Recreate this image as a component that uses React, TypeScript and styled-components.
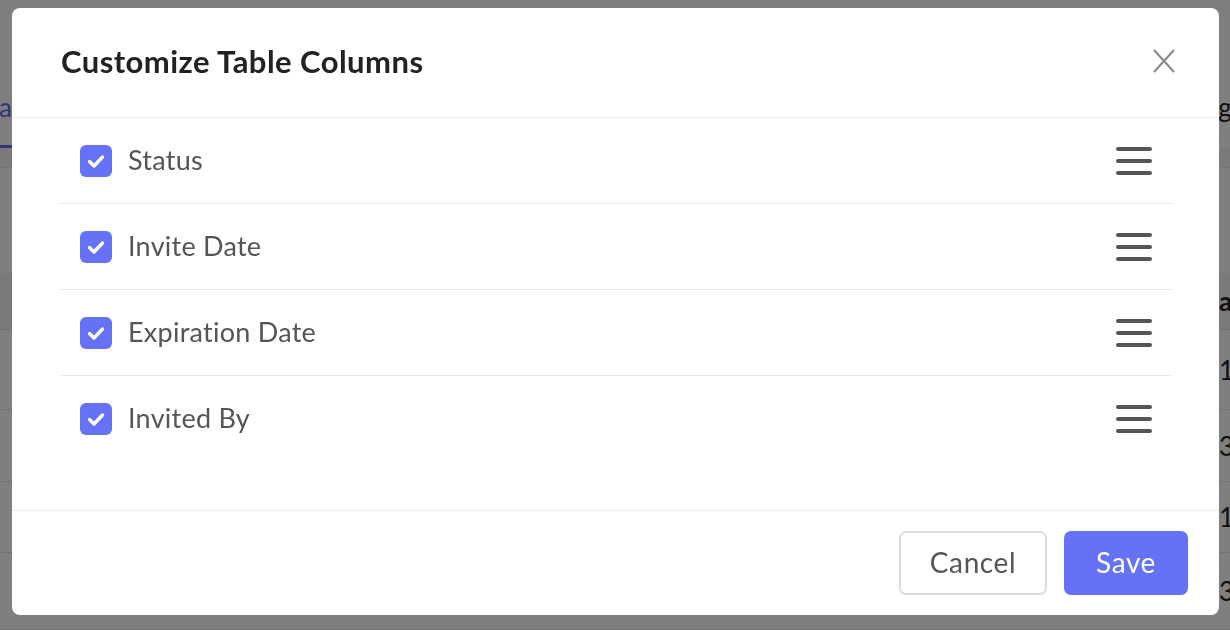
import React, { useState } from 'react'
import styled, { createGlobalStyle } from 'styled-components'

const GlobalStyle = createGlobalStyle`
  html, body {
    margin: 0;
    padding: 0;
  }
  body {
    font-family: Lato, "Liberation Sans", sans-serif;
    background: #ffffff;
  }
  * {
    box-sizing: border-box;
  }
`

/* ---------- page behind the dialog ---------- */

const Page = styled.div`
  width: 100vw;
  height: 100vh;
  overflow: hidden;
  background: #ffffff;
  color: #222;
`

const TabBar = styled.div`
  height: 148px;
  display: flex;
  justify-content: space-between;
  align-items: flex-end;
`

const TabSlot = styled.div<{ $side: 'left' | 'right' }>`
  width: 12px;
  display: flex;
  justify-content: flex-end;
  margin-right: ${({ $side }) => ($side === 'right' ? '-13px' : '0')};
`

const Tab = styled.div<{ $active?: boolean }>`
  white-space: nowrap;
  font-size: 26px;
  padding-bottom: 22px;
  color: ${({ $active }) => ($active ? '#5d6af4' : '#222')};
  border-bottom: 3px solid ${({ $active }) => ($active ? '#5d6af4' : 'transparent')};
`

const SubBar = styled.div`
  height: 20px;
  background: #f4f4f4;
  border-bottom: 1px solid #e9e9e9;
`

const Toolbar = styled.div`
  height: 105px;
`

const TableRow = styled.div<{ $head?: boolean; $h: number }>`
  height: ${({ $h }) => $h}px;
  display: grid;
  grid-template-columns: 1219px 200px;
  align-items: center;
  background: ${({ $head }) => ($head ? '#f4f4f4' : '#ffffff')};
  border-bottom: 1px solid #e6e6e6;
  font-size: 26px;
  font-weight: ${({ $head }) => ($head ? 700 : 400)};
  white-space: nowrap;
`

/* ---------- dialog ---------- */

const Overlay = styled.div`
  position: fixed;
  inset: 0;
  background: rgba(0, 0, 0, 0.5);
  display: flex;
  align-items: flex-start;
  padding: 8px 11px 15px 12px;
`

const Dialog = styled.div`
  width: 1207px;
  height: 607px;
  background: #ffffff;
  border-radius: 8px;
  display: flex;
  flex-direction: column;
  overflow: hidden;
`

const Header = styled.div`
  height: 110px;
  flex-shrink: 0;
  display: flex;
  align-items: center;
  justify-content: space-between;
  padding: 0 44px 4px 49px;
  border-bottom: 1px solid #ececec;
`

const Title = styled.h2`
  margin: 0;
  font-size: 31px;
  font-weight: 700;
  color: #222222;
  letter-spacing: 0.45px;
`

const CloseButton = styled.button`
  width: 22px;
  height: 24px;
  padding: 0;
  border: 0;
  background: none;
  cursor: pointer;
  display: flex;
`

const Body = styled.div`
  flex: 1;
  padding: 0 47px 0 48px;
`

const Row = styled.div`
  height: 86px;
  display: flex;
  align-items: center;
  padding: 0 20px;
  border-bottom: 1px solid #e8e8e8;

  &:last-child {
    border-bottom: 0;
  }
`

const Check = styled.button<{ $on: boolean }>`
  width: 32px;
  height: 32px;
  flex-shrink: 0;
  padding: 0;
  border: 0;
  border-radius: 6px;
  background: ${({ $on }) => ($on ? '#6672f6' : '#ffffff')};
  box-shadow: ${({ $on }) => ($on ? 'none' : 'inset 0 0 0 2px #cfcfcf')};
  display: flex;
  align-items: center;
  justify-content: center;
  cursor: pointer;
`

const Label = styled.span`
  flex: 1;
  margin: 0 0 3px 16px;
  font-size: 27px;
  letter-spacing: 0.25px;
  color: #555555;
`

const Handle = styled.div`
  width: 36px;
  height: 28px;
  display: flex;
  flex-direction: column;
  justify-content: space-between;
  cursor: grab;
`

const HandleLine = styled.span`
  height: 4px;
  border-radius: 2px;
  background: #555555;
`

const Footer = styled.div`
  height: 105px;
  flex-shrink: 0;
  display: flex;
  align-items: flex-start;
  justify-content: flex-end;
  gap: 17px;
  padding: 20px 31px 0 0;
  border-top: 1px solid #ececec;
`

const Button = styled.button<{ $primary?: boolean }>`
  height: 64px;
  width: ${({ $primary }) => ($primary ? '124px' : '148px')};
  padding: 0 0 3px;
  border-radius: 7px;
  font-family: inherit;
  font-size: 28px;
  letter-spacing: 0.6px;
  cursor: pointer;
  color: ${({ $primary }) => ($primary ? '#ffffff' : '#555555')};
  background: ${({ $primary }) => ($primary ? '#6672f6' : '#ffffff')};
  border: 2px solid ${({ $primary }) => ($primary ? '#6672f6' : '#dddddd')};
`

const CheckMark = () => (
  <svg width="20" height="20" viewBox="0 0 20 20" fill="none">
    <path d="M3.5 10.5 L8 15 L16.5 6" stroke="#ffffff" strokeWidth="3.4" strokeLinecap="round" strokeLinejoin="round" />
  </svg>
)

const CloseIcon = () => (
  <svg width="22" height="24" viewBox="0 0 22 24" fill="none">
    <path d="M1 1 L21 23 M21 1 L1 23" stroke="#888888" strokeWidth="2" />
  </svg>
)

const initialColumns = [
  { id: 'status', label: 'Status', on: true },
  { id: 'invite', label: 'Invite Date', on: true },
  { id: 'expire', label: 'Expiration Date', on: true },
  { id: 'invitedBy', label: 'Invited By', on: true },
]

const rows = [
  { h: 80, value: '1 day' },
  { h: 72, value: '3 days' },
  { h: 71, value: '1 day' },
  { h: 77, value: '3 days' },
]

const App = () => {
  const [columns, setColumns] = useState(initialColumns)

  const toggle = (id: string) => {
    setColumns((cols) => cols.map((c) => (c.id === id ? { ...c, on: !c.on } : c)))
  }

  return (
    <>
      <GlobalStyle />
      <Page>
        <TabBar>
          <TabSlot $side="left">
            <Tab $active>Data</Tab>
          </TabSlot>
          <TabSlot $side="right">
            <Tab>Settings</Tab>
          </TabSlot>
        </TabBar>
        <SubBar />
        <Toolbar />
        <TableRow $head $h={57}>
          <span />
          <span>amount</span>
        </TableRow>
        {rows.map((r, i) => (
          <TableRow key={i} $h={r.h}>
            <span />
            <span>{r.value}</span>
          </TableRow>
        ))}
      </Page>

      <Overlay>
        <Dialog>
          <Header>
            <Title>Customize Table Columns</Title>
            <CloseButton aria-label="Close">
              <CloseIcon />
            </CloseButton>
          </Header>
          <Body>
            {columns.map((c) => (
              <Row key={c.id}>
                <Check $on={c.on} onClick={() => toggle(c.id)} aria-label={c.label}>
                  {c.on && <CheckMark />}
                </Check>
                <Label>{c.label}</Label>
                <Handle>
                  <HandleLine />
                  <HandleLine />
                  <HandleLine />
                </Handle>
              </Row>
            ))}
          </Body>
          <Footer>
            <Button>Cancel</Button>
            <Button $primary>Save</Button>
          </Footer>
        </Dialog>
      </Overlay>
    </>
  )
}

export default App
